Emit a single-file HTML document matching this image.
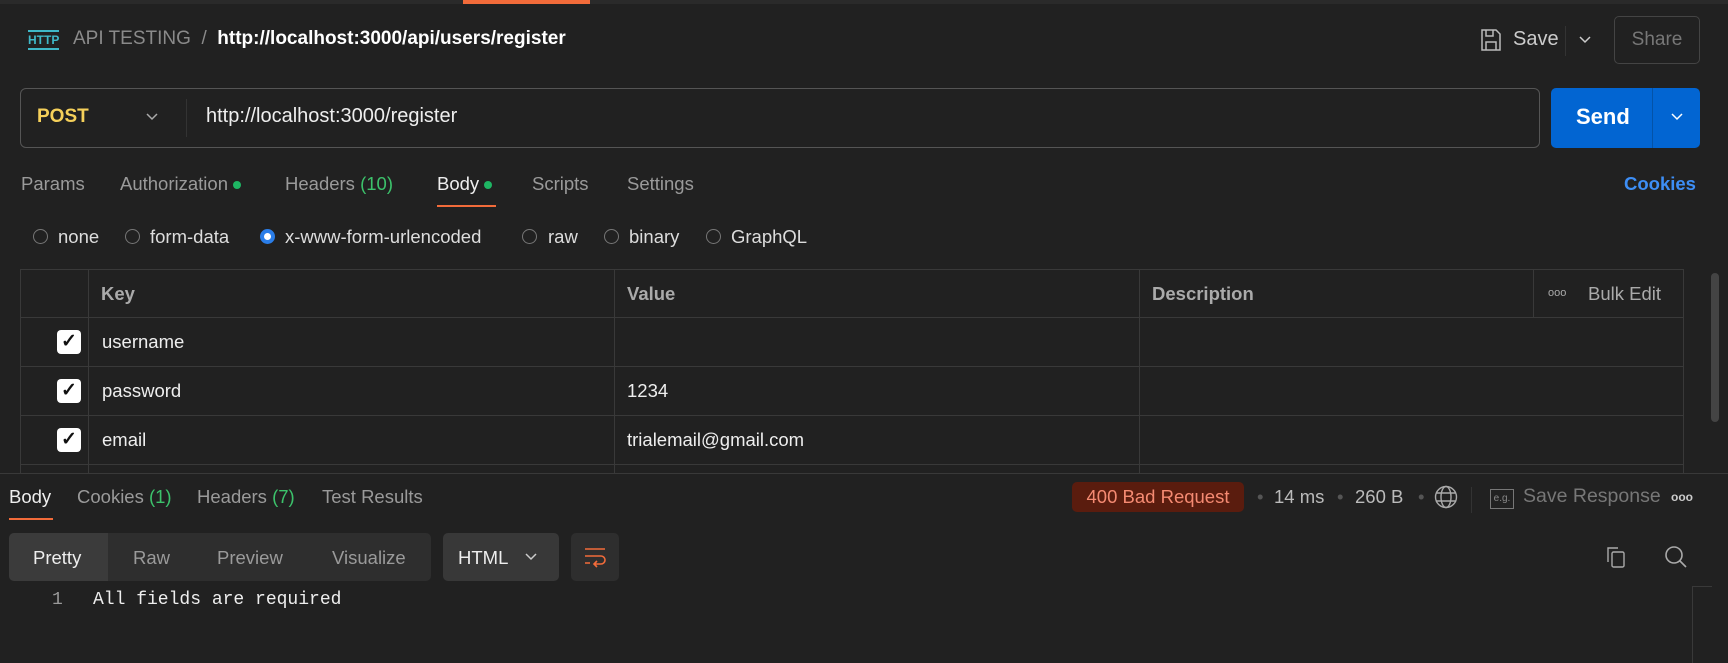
<!DOCTYPE html>
<html><head><style>
*{margin:0;padding:0;box-sizing:border-box}
body{width:1728px;height:663px;background:#212121;font-family:"Liberation Sans",sans-serif;color:#ccc;position:relative;overflow:hidden;font-size:18.5px}
.a{position:absolute;white-space:nowrap}
.g{color:#9a9a9a}
.dot{display:inline-block;width:8px;height:8px;border-radius:50%;background:#1eb563;margin-left:5px;vertical-align:middle}
.radio{position:absolute;width:15px;height:15px;border:1px solid #777;border-radius:50%}
.cb{position:absolute;left:57px;width:24px;height:24px;background:#fff;border-radius:4px}
.hl{position:absolute;height:1px;background:#393939}
.vl{position:absolute;width:1px;background:#393939}
</style></head><body>
<div class="a" style="left:0;top:0;width:1728px;height:4px;background:#2a2a2a"></div>
<div class="a" style="left:463px;top:0;width:127px;height:4px;background:#f26b3a"></div>
<div class="a" style="left:28px;top:30px;color:#3fb8c8;font-size:12px;font-weight:bold;border-top:2px solid #3fb8c8;border-bottom:2px solid #3fb8c8;line-height:14px;padding:1px 0">HTTP</div>
<div class="a g" style="left:73px;top:28px;font-size:19px;color:#8a8a8a">API TESTING &nbsp;/&nbsp; <b style="color:#fff">http://localhost:3000/api/users/register</b></div>
<svg class="a" style="left:1480px;top:28px" width="22" height="24" viewBox="0 0 22 24" fill="none" stroke="#bbb" stroke-width="1.5"><path d="M2 2h14l4 4v16H2z"/><path d="M6 2v6h7V2M6 22v-8h10v8"/></svg>
<div class="a" style="left:1513px;top:28px;font-size:20px;color:#ccc">Save</div>
<div class="a" style="left:1565px;top:26px;width:1px;height:30px;background:#333"></div>
<svg class="a" style="left:1578px;top:35px" width="14" height="10"><path d="M2 2l5 5 5-5" stroke="#ccc" stroke-width="1.5" fill="none"/></svg>
<div class="a" style="left:1614px;top:16px;width:86px;height:48px;border:1px solid #444;border-radius:5px;color:#777;font-size:19px;text-align:center;line-height:46px">Share</div>
<div class="a" style="left:20px;top:88px;width:1520px;height:60px;border:1px solid #555;border-radius:6px"></div>
<div class="a" style="left:37px;top:106px;color:#f5d05a;font-weight:bold;font-size:19px">POST</div>
<svg class="a" style="left:145px;top:112px" width="14" height="10"><path d="M2 2l5 5 5-5" stroke="#aaa" stroke-width="1.5" fill="none"/></svg>
<div class="a" style="left:186px;top:99px;width:1px;height:38px;background:#333"></div>
<div class="a" style="left:206px;top:105px;color:#eee;font-size:20px">http://localhost:3000/register</div>
<div class="a" style="left:1551px;top:88px;width:149px;height:60px;background:#0265d2;border-radius:5px"></div>
<div class="a" style="left:1652px;top:88px;width:1px;height:60px;background:#0453a8"></div>
<div class="a" style="left:1576px;top:104px;color:#fff;font-weight:bold;font-size:22px">Send</div>
<svg class="a" style="left:1670px;top:112px" width="14" height="10"><path d="M2 2l5 5 5-5" stroke="#fff" stroke-width="1.5" fill="none"/></svg>
<div class="a g" style="left:21px;top:173px">Params</div>
<div class="a g" style="left:120px;top:173px">Authorization<span class="dot"></span></div>
<div class="a g" style="left:285px;top:173px">Headers <span style="color:#3cc26b">(10)</span></div>
<div class="a" style="left:437px;top:173px;color:#eee">Body<span class="dot"></span></div>
<div class="a" style="left:437px;top:205px;width:59px;height:2px;background:#f26b3a"></div>
<div class="a g" style="left:532px;top:173px">Scripts</div>
<div class="a g" style="left:627px;top:173px">Settings</div>
<div class="a" style="left:1624px;top:173px;color:#3d8ef5;font-weight:bold">Cookies</div>
<div class="radio" style="left:33px;top:229px"></div><div class="a" style="left:58px;top:226px;color:#ddd">none</div>
<div class="radio" style="left:125px;top:229px"></div><div class="a" style="left:150px;top:226px;color:#ddd">form-data</div>
<div class="radio" style="left:260px;top:229px;border:4px solid #2a7de8;background:#fff"></div><div class="a" style="left:285px;top:226px;color:#ddd">x-www-form-urlencoded</div>
<div class="radio" style="left:522px;top:229px"></div><div class="a" style="left:548px;top:226px;color:#ddd">raw</div>
<div class="radio" style="left:604px;top:229px"></div><div class="a" style="left:629px;top:226px;color:#ddd">binary</div>
<div class="radio" style="left:706px;top:229px"></div><div class="a" style="left:731px;top:226px;color:#ddd">GraphQL</div>
<div class="hl" style="left:20px;top:269px;width:1664px"></div>
<div class="hl" style="left:20px;top:317px;width:1664px"></div>
<div class="hl" style="left:20px;top:366px;width:1664px"></div>
<div class="hl" style="left:20px;top:415px;width:1664px"></div>
<div class="hl" style="left:20px;top:464px;width:1664px"></div>
<div class="vl" style="left:20px;top:269px;height:205px"></div>
<div class="vl" style="left:88px;top:269px;height:205px"></div>
<div class="vl" style="left:614px;top:269px;height:205px"></div>
<div class="vl" style="left:1139px;top:269px;height:205px"></div>
<div class="vl" style="left:1533px;top:269px;height:48px"></div>
<div class="vl" style="left:1683px;top:269px;height:205px"></div>
<div class="a" style="left:101px;top:283px;color:#aaa;font-weight:bold">Key</div>
<div class="a" style="left:627px;top:283px;color:#aaa;font-weight:bold">Value</div>
<div class="a" style="left:1152px;top:283px;color:#aaa;font-weight:bold">Description</div>
<div class="a" style="left:1548px;top:287px;color:#aaa;font-size:11px">ooo</div>
<div class="a" style="left:1588px;top:283px;color:#aaa">Bulk Edit</div>
<div class="cb" style="top:330px"></div><div class="a" style="left:61px;top:330px;color:#111;font-size:19px;font-weight:bold">✓</div>
<div class="cb" style="top:379px"></div><div class="a" style="left:61px;top:379px;color:#111;font-size:19px;font-weight:bold">✓</div>
<div class="cb" style="top:428px"></div><div class="a" style="left:61px;top:428px;color:#111;font-size:19px;font-weight:bold">✓</div>
<div class="a" style="left:102px;top:331px;color:#eee">username</div>
<div class="a" style="left:102px;top:380px;color:#eee">password</div>
<div class="a" style="left:627px;top:380px;color:#eee">1234</div>
<div class="a" style="left:102px;top:429px;color:#eee">email</div>
<div class="a" style="left:627px;top:429px;color:#eee">trialemail@gmail.com</div>
<div class="a" style="left:1711px;top:273px;width:8px;height:149px;background:#444;border-radius:4px"></div>
<div class="a" style="left:0;top:473px;width:1728px;height:190px;background:#212121;border-top:1px solid #393939"></div>
<div class="a" style="left:9px;top:486px;color:#eee">Body</div>
<div class="a" style="left:9px;top:518px;width:44px;height:2px;background:#f26b3a"></div>
<div class="a g" style="left:77px;top:486px">Cookies <span style="color:#3cc26b">(1)</span></div>
<div class="a g" style="left:197px;top:486px">Headers <span style="color:#3cc26b">(7)</span></div>
<div class="a g" style="left:322px;top:486px">Test Results</div>
<div class="a" style="left:1072px;top:482px;width:172px;height:30px;background:#5a1c0e;border-radius:5px;color:#f58a72;text-align:center;line-height:30px">400 Bad Request</div>
<div class="a g" style="left:1257px;top:486px;color:#555">•</div>
<div class="a" style="left:1274px;top:486px;color:#bbb">14 ms</div>
<div class="a" style="left:1337px;top:486px;color:#555">•</div>
<div class="a" style="left:1355px;top:486px;color:#bbb">260 B</div>
<div class="a" style="left:1418px;top:486px;color:#555">•</div>
<svg class="a" style="left:1434px;top:485px" width="24" height="24" viewBox="0 0 24 24" fill="none" stroke="#aaa" stroke-width="1.4"><circle cx="12" cy="12" r="10.5"/><ellipse cx="12" cy="12" rx="5" ry="10.5"/><path d="M2 8h20M2 16h20"/></svg>
<div class="a" style="left:1471px;top:487px;width:1px;height:26px;background:#333"></div>
<div class="a" style="left:1490px;top:489px;width:24px;height:20px;border:1.5px solid #777;font-size:10px;color:#888;text-align:center;line-height:17px">e.g.</div>
<div class="a" style="left:1523px;top:485px;color:#777;font-size:19.5px">Save Response</div>
<div class="a" style="left:1671px;top:490px;color:#ccc;font-size:12px;font-weight:bold">ooo</div>
<div class="a" style="left:9px;top:533px;width:422px;height:48px;background:#2e2e2e;border-radius:5px"></div>
<div class="a" style="left:9px;top:533px;width:99px;height:48px;background:#3b3b3b;border-radius:5px 0 0 5px"></div>
<div class="a" style="left:33px;top:547px;color:#eee">Pretty</div>
<div class="a g" style="left:133px;top:547px">Raw</div>
<div class="a g" style="left:217px;top:547px">Preview</div>
<div class="a g" style="left:332px;top:547px">Visualize</div>
<div class="a" style="left:443px;top:533px;width:116px;height:48px;background:#383838;border-radius:5px"></div>
<div class="a" style="left:458px;top:547px;color:#eee">HTML</div>
<svg class="a" style="left:524px;top:552px" width="14" height="10"><path d="M2 2l5 5 5-5" stroke="#ccc" stroke-width="1.5" fill="none"/></svg>
<div class="a" style="left:571px;top:533px;width:48px;height:48px;background:#2e2e2e;border-radius:5px"></div>
<svg class="a" style="left:583px;top:545px" width="24" height="24" viewBox="0 0 24 24" fill="none" stroke="#f26b3a" stroke-width="1.6"><path d="M2 4h20M2 11h16a4 4 0 0 1 0 8h-6M14 16l-3 3 3 3M2 18h5"/></svg>
<svg class="a" style="left:1605px;top:545px" width="22" height="24" viewBox="0 0 22 24" fill="none" stroke="#aaa" stroke-width="1.4"><path d="M3 17V3h10"/><rect x="7" y="7" width="12" height="15" rx="1.5"/></svg>
<svg class="a" style="left:1664px;top:545px" width="24" height="24" viewBox="0 0 24 24" fill="none" stroke="#aaa" stroke-width="1.6"><circle cx="10" cy="10" r="8"/><path d="M16 16l6 6"/></svg>
<div class="a" style="left:1692px;top:586px;width:1px;height:77px;background:#393939"></div>
<div class="a" style="left:1692px;top:586px;width:20px;height:1px;background:#393939"></div>
<div class="a" style="left:52px;top:590px;color:#999;font-family:'Liberation Mono',monospace;font-size:18px">1</div>
<div class="a" style="left:93px;top:590px;color:#eee;font-family:'Liberation Mono',monospace;font-size:18px">All fields are required</div>
</body></html>
